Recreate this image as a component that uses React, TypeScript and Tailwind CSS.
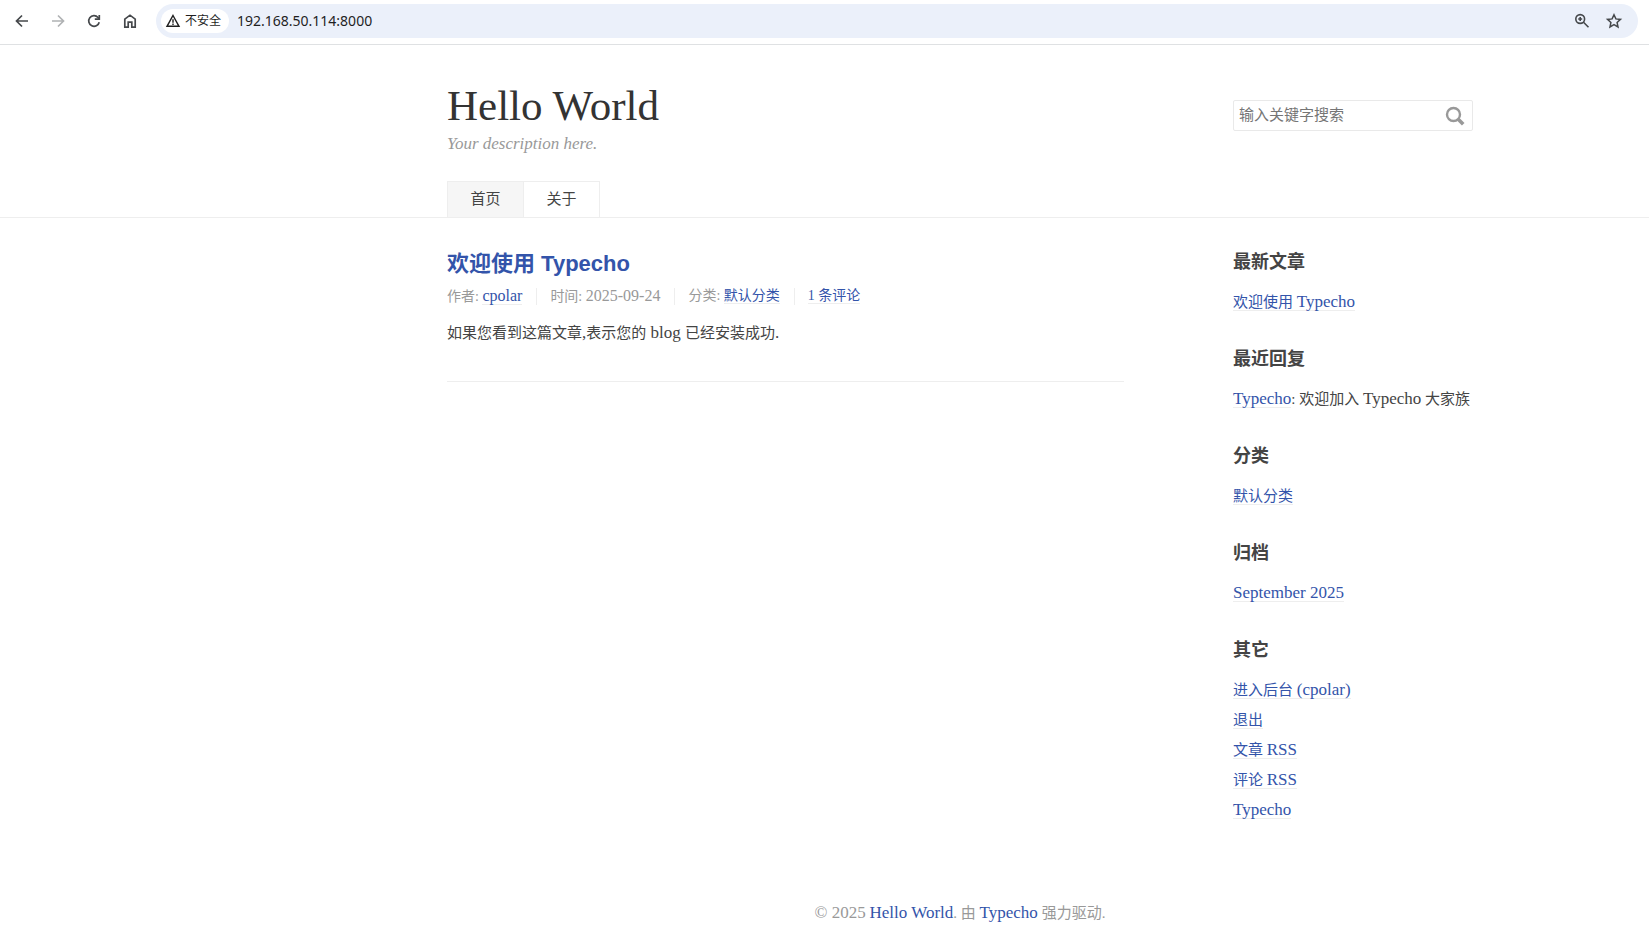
import type { ReactNode } from "react";

const SIDEBAR = [
  { title: "最新文章", items: [{ link: "欢迎使用", latin: "Typecho" }] },
  { title: "最近回复", items: [{ latin: "Typecho", comment: true }] },
  { title: "分类", items: [{ link: "默认分类" }] },
  { title: "归档", items: [{ latin: "September 2025" }] },
  {
    title: "其它",
    items: [
      { link: "进入后台", latin: "(cpolar)" },
      { link: "退出" },
      { link: "文章", latin: "RSS" },
      { link: "评论", latin: "RSS" },
      { latin: "Typecho" },
    ],
  },
] as { title: string; items: { link?: string; latin?: string; comment?: boolean }[] }[];

// Latin text runs slightly larger than the Chinese text around it
function En({ children }: { children: ReactNode }) {
  return <span className="text-[17px] leading-none">{children}</span>;
}

function TextLink({ children }: { children: ReactNode }) {
  return (
    <a href="#" className="border-b border-[#eee] text-[#3354aa]">
      {children}
    </a>
  );
}

function BrowserBar() {
  return (
    <div className="flex h-[45px] items-center border-b border-[#dfe1e3] pr-[11px] pb-[3px] text-[#45484b]">
      <div className="flex w-[156px] shrink-0 items-center gap-4 pl-3">
        <button aria-label="Back" className="flex size-5 items-center justify-center">
          <svg width="20" height="20" viewBox="0 0 20 20" fill="none" stroke="currentColor" strokeWidth="1.7">
            <path d="M16 10H4.8M10 4.5 4.5 10l5.5 5.5" />
          </svg>
        </button>
        <button aria-label="Forward" className="flex size-5 items-center justify-center text-[#b0b2b4]">
          <svg width="20" height="20" viewBox="0 0 20 20" fill="none" stroke="currentColor" strokeWidth="1.7">
            <path d="M4 10h11.2M10 4.5l5.5 5.5-5.5 5.5" />
          </svg>
        </button>
        <button aria-label="Reload" className="flex size-5 items-center justify-center">
          <svg width="20" height="20" viewBox="0 0 20 20" fill="none" stroke="currentColor" strokeWidth="1.7">
            <path d="M15.2 11.2A5.3 5.3 0 1 1 14 6.5l1.2 1.3" />
            <path d="M15.3 4v4.2h-4.5" />
          </svg>
        </button>
        <button aria-label="Home" className="flex size-5 items-center justify-center">
          <svg width="20" height="20" viewBox="0 0 20 20" fill="none" stroke="currentColor" strokeWidth="1.7">
            <path d="M4.8 8.2 10 4.2l5.2 4v8h-3.4v-5H8.2v5H4.8z" />
          </svg>
        </button>
      </div>
      <div className="flex h-[34px] min-w-0 flex-1 items-center rounded-full bg-[#ebf0fa] pr-[14px] pl-[5px]">
        <button className="flex h-6 shrink-0 items-center gap-1 rounded-full bg-white pr-2 pl-1 text-xs text-[#1f1f1f]">
          <svg width="16" height="16" viewBox="0 0 16 16" fill="none" stroke="currentColor" strokeWidth="1.4">
            <path d="M8 2.5 14 13.3H2z" />
            <path d="M8 6.2v3.5M8 10.6v1.3" />
          </svg>
          不安全
        </button>
        <input
          aria-label="Address"
          defaultValue="192.168.50.114:8000"
          className="ml-2 min-w-0 flex-1 bg-transparent font-['Noto_Sans',sans-serif] text-sm text-[#1f1f1f] outline-none"
        />
        <div className="flex gap-3">
          <button aria-label="Zoom" className="flex size-5 items-center justify-center">
            <svg width="18" height="18" viewBox="0 0 18 18" fill="none" stroke="currentColor" strokeWidth="1.6">
              <circle cx="7.2" cy="7" r="4.4" />
              <path d="m10.5 10.3 5 5M7.2 5v4M5.2 7h4" />
            </svg>
          </button>
          <button aria-label="Bookmark" className="flex size-5 items-center justify-center">
            <svg width="18" height="18" viewBox="0 0 18 18" fill="none" stroke="currentColor" strokeWidth="1.5">
              <path d="m9 2.7 1.9 4.2 4.6.5-3.4 3.1.9 4.500-4-2.300L5 15l.9-4.500-3.400-3.100 4.600-.5z" />
            </svg>
          </button>
        </div>
      </div>
    </div>
  );
}

function Header() {
  return (
    <header className="border-b border-[#eee] pt-9">
      <div className="ml-[447px] max-w-[1026px]">
        <div className="flex items-start justify-between">
          <div>
            <a href="#" className="block text-[43px] leading-[50px] text-[#333]">
              Hello World
            </a>
            <p className="text-[17px] leading-[26px] text-[#999] italic">Your description here.</p>
          </div>
          <form className="mt-[19px] flex h-[31px] w-[240px] items-center rounded-[2px] border border-[#e9e9e9] pr-[7px] pl-[5px]">
            <input
              type="text"
              aria-label="搜索关键字"
              placeholder="输入关键字搜索"
              className="min-w-0 flex-1 text-[15px] outline-none placeholder:text-[#757575]"
            />
            <button type="button" aria-label="搜索">
              <svg width="20" height="20" viewBox="0 0 20 20" fill="none" stroke="#999">
                <circle cx="8.5" cy="8.5" r="6.5" strokeWidth="2.4" />
                <path d="m13.2 13.2 5 5" strokeWidth="3.6" />
              </svg>
            </button>
          </form>
        </div>
        <nav className="mt-6 flex text-[15px] leading-[35px]">
          <a href="#" className="w-[77px] border border-b-0 border-[#eee] bg-[#f6f6f6] text-center text-[#444]">
            首页
          </a>
          <a href="#" className="-ml-px w-[77px] border border-b-0 border-[#eee] text-center text-[#444]">
            关于
          </a>
        </nav>
      </div>
    </header>
  );
}

function Post() {
  return (
    <article className="h-fit max-w-[677px] flex-1 border-b border-[#eee] pb-9">
      <h2 className="text-[22px] leading-8 font-bold font-['Liberation_Sans','Noto_Sans_CJK_SC',sans-serif]">
        <a href="#" className="text-[#3354aa]">
          欢迎使用 Typecho
        </a>
      </h2>
      <ul className="mt-2 flex text-sm leading-4 text-[#999]">
        <li className="mr-[13px] border-r border-[#eee] pr-[14px]">
          作者:{" "}
          <TextLink>
            <span className="text-base leading-none">cpolar</span>
          </TextLink>
        </li>
        <li className="mr-[13px] border-r border-[#eee] pr-[14px]">
          时间:{" "}
          <time dateTime="2025-09-24" className="text-base leading-none">
            2025-09-24
          </time>
        </li>
        <li className="mr-[13px] border-r border-[#eee] pr-[14px]">
          分类: <TextLink>默认分类</TextLink>
        </li>
        <li>
          <TextLink>1 条评论</TextLink>
        </li>
      </ul>
      <p className="mt-4 leading-6">
        如果您看到这篇文章<En>,</En>表示您的<En> blog </En>已经安装成功<En>.</En>
      </p>
    </article>
  );
}

function Sidebar() {
  return (
    <aside className="flex w-[240px] shrink-0 flex-col gap-[30px] pt-[2px]">
      {SIDEBAR.map((section) => (
        <section key={section.title}>
          <h3 className="text-lg leading-6 font-bold font-['Liberation_Sans','Noto_Sans_CJK_SC',sans-serif]">
            {section.title}
          </h3>
          <ul className="mt-[13px] leading-[30px]">
            {section.items.map((item, idx) => (
              <li key={idx} className="h-[30px] whitespace-nowrap">
                <TextLink>
                  {item.link}
                  {item.link && item.latin && " "}
                  {item.latin && <En>{item.latin}</En>}
                </TextLink>
                {item.comment && (
                  <>
                    : 欢迎加入 <En>Typecho</En> 大家族
                  </>
                )}
              </li>
            ))}
          </ul>
        </section>
      ))}
    </aside>
  );
}

export default function App() {
  return (
    <div className="min-h-screen bg-white font-['Liberation_Serif','Noto_Sans_CJK_SC',serif] text-[15px] text-[#444]">
      <BrowserBar />
      <Header />
      <div className="ml-[447px] flex max-w-[1026px] justify-between pt-[30px]">
        <Post />
        <Sidebar />
      </div>
      <footer className="ml-[447px] max-w-[1026px] pt-[73px] pb-3 text-center leading-[30px] text-[#999]">
        <En>© 2025</En>{" "}
        <a href="#" className="text-[#3354aa]">
          <En>Hello World</En>
        </a>
        . 由{" "}
        <a href="#" className="text-[#3354aa]">
          <En>Typecho</En>
        </a>{" "}
        强力驱动.
      </footer>
    </div>
  );
}
